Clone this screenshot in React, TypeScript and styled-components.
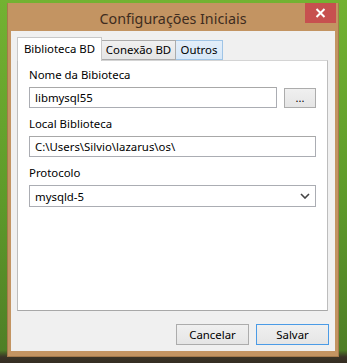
import React from "react";
import styled, { createGlobalStyle } from "styled-components";

const GlobalStyle = createGlobalStyle`
  html, body {
    margin: 0;
    padding: 0;
  }
  body {
    width: 347px;
    height: 363px;
    overflow: hidden;
    background: linear-gradient(to bottom, #73b232 0px, #5e9a2a 200px, #4f7f26 350px, #3a3326 357px, #342d22 363px);
    font-family: "Noto Sans", "Open Sans", sans-serif;
  }
`;

const Desktop = styled.div`
  box-sizing: border-box;
  width: 347px;
  height: 363px;
  padding: 3px 8px 6px 7px;
  display: flex;
`;

const Frame = styled.div`
  flex: 1;
  display: flex;
  flex-direction: column;
  background: #c39462;
  border: 1px solid #a57a4c;
  border-top: none;
`;

const TitleBar = styled.div`
  height: 28px;
  display: grid;
  grid-template-columns: 31px 1fr 31px;
  align-items: start;
  padding: 0 2px;
`;

const Title = styled.div`
  grid-column: 2;
  text-align: center;
  font-size: 14.3px;
  line-height: 20px;
  margin-top: 6px;
  color: #3e2c20;
  white-space: nowrap;
`;

const CloseButton = styled.div`
  grid-column: 3;
  width: 31px;
  height: 20px;
  background: #c7504f;
  display: flex;
  align-items: center;
  justify-content: center;
`;

const Client = styled.div`
  flex: 1;
  margin: 0 3px 5px 3px;
  background: #f0f0f0;
  display: flex;
  flex-direction: column;
  padding: 6px 6px 6px 6px;
  font-size: 11.4px;
  color: #000;
`;

const TabStrip = styled.div`
  display: flex;
  align-items: flex-end;
  height: 23px;
  position: relative;
  z-index: 1;
`;

const Tab = styled.div<{ $active?: boolean; $hover?: boolean; $w: number }>`
  box-sizing: border-box;
  width: ${(p) => p.$w}px;
  height: ${(p) => (p.$active ? "24px" : "20px")};
  margin-bottom: ${(p) => (p.$active ? "-1px" : "0")};
  padding-top: ${(p) => (p.$active ? "3px" : "1px")};
  text-align: center;
  border: 1px solid ${(p) => (p.$active ? "#c8c8c8" : p.$hover ? "#9fc4e6" : "#acacac")};
  ${(p) => (p.$active ? "border-bottom: none;" : "border-left: none;")}
  background: ${(p) =>
    p.$active ? "#ffffff" : p.$hover ? "linear-gradient(#e3eef9, #d6e7f8)" : "linear-gradient(#f0f0f0, #e5e5e5)"};
  line-height: 16px;
  white-space: nowrap;
`;

const Panel = styled.div`
  flex: 1;
  margin-right: 1px;
  background: #fff;
  border: 1px solid #bdbdbd;
  border-top-color: #d4d4d4;
  border-bottom-color: #a8a8a8;
  padding: 6px 11px 0 11px;
  display: flex;
  flex-direction: column;
  gap: 8px;
`;

const Field = styled.div`
  display: flex;
  flex-direction: column;
`;

const Label = styled.div`
  line-height: 16px;
  margin-bottom: 4px;
`;

const Row = styled.div`
  display: flex;
  gap: 7px;
  align-items: flex-start;
`;

const TextBox = styled.input`
  box-sizing: border-box;
  flex: 1;
  min-width: 0;
  height: 21px;
  margin: 0;
  border: 1px solid #abadb3;
  border-top-color: #a8a8a8;
  padding: 0 5px;
  font: inherit;
  color: #000;
  background: #fff;
  outline: none;
`;

const BrowseButton = styled.div`
  box-sizing: border-box;
  width: 32px;
  height: 20px;
  margin-top: 1px;
  border: 1px solid #acacac;
  background: linear-gradient(#f0f0f0, #e5e5e5);
  display: flex;
  justify-content: center;
  align-items: flex-end;
  font-size: 11px;
  line-height: 14px;
  padding-bottom: 2px;
`;

const ComboBox = styled.div`
  box-sizing: border-box;
  height: 22px;
  border: 1px solid #abadb3;
  display: flex;
  align-items: center;
  justify-content: space-between;
  padding: 0 5px 0 5px;
  background: #fff;
`;

const Footer = styled.div`
  display: flex;
  justify-content: flex-end;
  gap: 7px;
  margin-top: 13px;
`;

const DialogButton = styled.div<{ $default?: boolean }>`
  box-sizing: border-box;
  width: 73px;
  height: 21px;
  border: 1px solid ${(p) => (p.$default ? "#4b9be6" : "#acacac")};
  background: linear-gradient(#f0f0f0, #e5e5e5);
  display: flex;
  align-items: center;
  justify-content: center;
  line-height: 16px;
`;

export default function App() {
  return (
    <>
      <GlobalStyle />
      <Desktop>
        <Frame>
          <TitleBar>
            <Title>Configurações Iniciais</Title>
            <CloseButton>
              <svg width="11" height="10" viewBox="0 0 11 10">
                <path d="M1.5 1 L9.5 9 M9.5 1 L1.5 9" stroke="#fff" strokeWidth="2" />
              </svg>
            </CloseButton>
          </TitleBar>
          <Client>
            <TabStrip>
              <Tab $active $w={85}>Biblioteca BD</Tab>
              <Tab $w={74}>Conexão BD</Tab>
              <Tab $hover $w={47}>Outros</Tab>
            </TabStrip>
            <Panel>
              <Field>
                <Label>Nome da Bibioteca</Label>
                <Row>
                  <TextBox defaultValue="libmysql55" readOnly />
                  <BrowseButton>...</BrowseButton>
                </Row>
              </Field>
              <Field>
                <Label>Local Biblioteca</Label>
                <Row>
                  <TextBox defaultValue="C:\Users\Silvio\lazarus\os\" readOnly />
                </Row>
              </Field>
              <Field>
                <Label>Protocolo</Label>
                <ComboBox>
                  <span>mysqld-5</span>
                  <svg width="10" height="6" viewBox="0 0 10 6">
                    <path d="M1 1 L5 5 L9 1" fill="none" stroke="#444" strokeWidth="1.6" />
                  </svg>
                </ComboBox>
              </Field>
            </Panel>
            <Footer>
              <DialogButton>Cancelar</DialogButton>
              <DialogButton $default>Salvar</DialogButton>
            </Footer>
          </Client>
        </Frame>
      </Desktop>
    </>
  );
}
